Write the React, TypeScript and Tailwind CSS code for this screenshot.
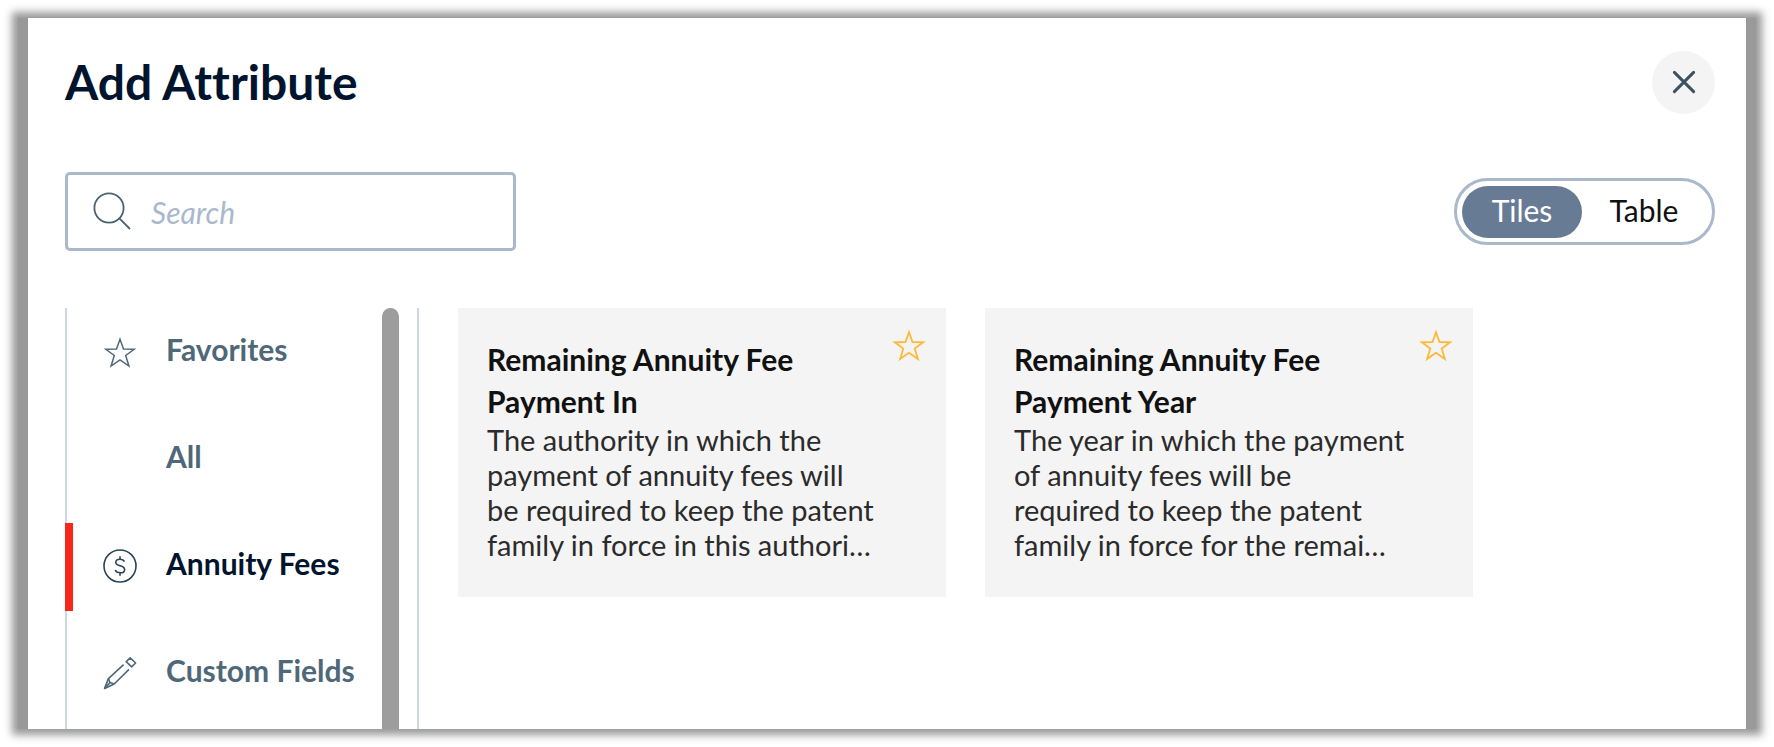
import { useState } from "react";

const STAR_PATH =
  "M16 2.2 L19.5 12 L30.2 12.3 L21.7 18.5 L24.9 29 L16 22.8 L7.1 29 L10.3 18.5 L1.8 12.3 L12.5 12 Z";

const StarIcon = ({ strokeWidth = 1.5 }: { strokeWidth?: number }) => (
  <svg width="34" height="32" viewBox="-1 0 34 32" fill="none" aria-hidden="true">
    <path d={STAR_PATH} stroke="currentColor" strokeWidth={strokeWidth} />
  </svg>
);

const DollarIcon = () => (
  <svg
    width="34"
    height="34"
    viewBox="0 1 34 34"
    fill="none"
    stroke="#2c4352"
    strokeWidth="1.6"
    aria-hidden="true"
    className="overflow-visible"
  >
    <circle cx="17" cy="17" r="16" />
    <path d="M21.4 12.6 C20.6 11 19 10.2 17 10.2 C14.6 10.2 12.8 11.4 12.8 13.4 C12.8 17.6 21.6 15.8 21.6 20.4 C21.6 22.6 19.6 23.8 17.2 23.8 C14.8 23.8 13 22.8 12.2 21 M17 7.2 V10.2 M17 23.8 V26.8" />
  </svg>
);

const PencilIcon = () => (
  <svg
    width="34"
    height="34"
    viewBox="0 1 34 34"
    fill="none"
    stroke="currentColor"
    strokeWidth="1.6"
    strokeLinejoin="round"
    aria-hidden="true"
  >
    <path d="M20.6 8.6 L5.4 22.6 L1.6 32.4 L11.2 28 L26 13.4" />
    <path d="M5.4 22.6 L7 26.6 L11.2 28 M1.6 32.4 L7 26.6" />
    <path d="M27.2 1.8 L32.6 7 L28.6 10.8 L23.2 5.6 Z" />
  </svg>
);

const SearchIcon = () => (
  <svg
    width="38"
    height="38"
    viewBox="0 1 38 38"
    fill="none"
    stroke="#4a6272"
    strokeWidth="1.8"
    aria-hidden="true"
  >
    <circle cx="16" cy="17" r="14.6" />
    <path d="M26.4 27.4 L37 38" />
  </svg>
);

const categories = [
  { name: "Favorites", icon: <StarIcon /> },
  { name: "All", icon: null },
  { name: "Annuity Fees", icon: <DollarIcon /> },
  { name: "Custom Fields", icon: <PencilIcon /> },
];

const attributes = [
  {
    title: "Remaining Annuity Fee Payment In",
    text: "The authority in which the payment of annuity fees will be required to keep the patent family in force in this authori…",
  },
  {
    title: "Remaining Annuity Fee Payment Year",
    text: "The year in which the payment of annuity fees will be required\u00a0to keep the patent family in force for the remai…",
  },
];

const views = ["Tiles", "Table"];

const App = () => {
  const [active, setActive] = useState("Annuity Fees");
  const [view, setView] = useState("Tiles");

  return (
    <div className="flex min-h-screen bg-white p-[18px] font-['Lato',sans-serif] [font-variant-ligatures:none]">
      <div className="flex flex-1 bg-[#999999] px-[10px] shadow-[0_0_8px_6px_#999999]">
        <main className="flex flex-1 flex-col bg-white pl-[37px] pr-[31px] pt-8">
          <header className="flex items-center justify-between">
            <h1 className="text-[48px] leading-[64px] font-bold text-[#00142d]">
              Add Attribute
            </h1>
            <button
              type="button"
              aria-label="Close"
              className="flex size-[63px] items-center justify-center rounded-full bg-[#f4f4f4]"
            >
              <svg
                width="24"
                height="24"
                viewBox="0 0 24 24"
                stroke="#3a5362"
                strokeWidth="3"
                strokeLinecap="round"
                aria-hidden="true"
              >
                <path d="M2.4 2.4 L21.6 21.6 M21.6 2.4 L2.4 21.6" />
              </svg>
            </button>
          </header>

          <div className="mt-[58px] flex items-center justify-between">
            <label className="flex h-[79px] w-[451px] items-center gap-5 rounded-[5px] border-3 border-[#a9b9cb] px-[25px] pb-0.5">
              <SearchIcon />
              <input
                type="text"
                aria-label="Search"
                placeholder="Search"
                className="min-w-0 flex-1 pt-1 text-[30px] text-[#00142d] outline-none placeholder:text-[#a9b9cb] placeholder:italic"
              />
            </label>
            <div className="flex h-[67px] w-[261px] items-center gap-0.5 rounded-full border-3 border-[#a9b9cb] px-[5px]">
              {views.map((name) => (
                <button
                  key={name}
                  type="button"
                  aria-pressed={view === name}
                  onClick={() => setView(name)}
                  className={`h-[52px] w-[120px] rounded-full pb-0.5 text-[30px] ${
                    view === name ? "bg-[#687b95] text-white" : "text-[#111111]"
                  }`}
                >
                  {name}
                </button>
              ))}
            </div>
          </div>

          <div className="mt-[57px] flex flex-1 gap-[39px]">
            <div className="flex w-[354px] shrink-0 justify-between border-x-2 border-[#cdd7e3] pr-[18px]">
              <nav className="-ml-0.5 flex flex-col gap-[19px] pt-px">
                {categories.map(({ name, icon }) => (
                  <button
                    key={name}
                    type="button"
                    onClick={() => setActive(name)}
                    className={`flex h-[88px] items-center border-l-8 pb-2 pl-[30px] text-[30px] font-bold ${
                      active === name
                        ? "border-[#f9261c] text-[#00142d]"
                        : "border-transparent text-[#4f6878]"
                    }`}
                  >
                    <span className="flex w-[63px] items-center pt-2">
                      {icon}
                    </span>
                    {name}
                  </button>
                ))}
              </nav>
              <div className="w-[17px] rounded-t-full bg-[#9d9d9d]" />
            </div>

            <div className="grid flex-1 grid-cols-[repeat(auto-fill,488px)] content-start gap-[39px]">
              {attributes.map(({ title, text }) => (
                <article
                  key={title}
                  className="flex items-start justify-between bg-[#f4f4f4] pt-[30px] pr-5 pb-[35px] pl-[29px]"
                >
                  <div className="w-[392px]">
                    <h2 className="text-[30px] leading-[42px] font-bold text-[#111111]">
                      {title}
                    </h2>
                    <p className="text-[29px] leading-[35px] text-[#2b2b2b]">
                      {text}
                    </p>
                  </div>
                  <button
                    type="button"
                    aria-label={`Add ${title} to favorites`}
                    className="-mt-2 text-[#ffb938]"
                  >
                    <StarIcon strokeWidth={1.8} />
                  </button>
                </article>
              ))}
            </div>
          </div>
        </main>
      </div>
    </div>
  );
};

export default App;
